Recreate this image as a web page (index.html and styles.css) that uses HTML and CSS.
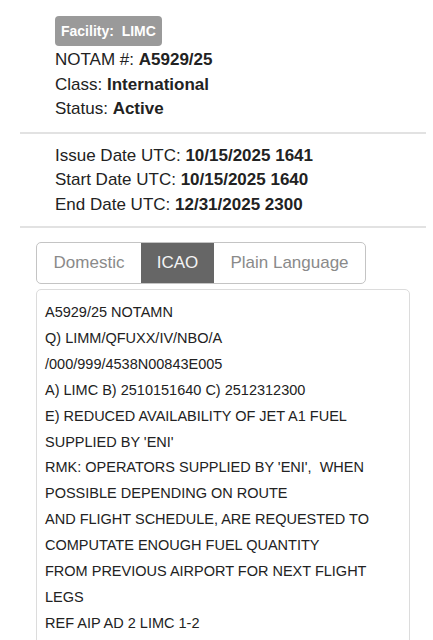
FILE: index.html
```html
<!DOCTYPE html>
<html>
<head>
<meta charset="utf-8">
<link rel="stylesheet" href="styles.css">
</head>
<body>
<div class="section head">
  <div class="badge">Facility:&nbsp; LIMC</div>
  <div class="row">NOTAM #: <b>A5929/25</b></div>
  <div class="row">Class: <b>International</b></div>
  <div class="row">Status: <b>Active</b></div>
</div>
<div class="divider"></div>
<div class="section dates">
  <div class="row">Issue Date UTC: <b>10/15/2025 1641</b></div>
  <div class="row">Start Date UTC: <b>10/15/2025 1640</b></div>
  <div class="row">End Date UTC: <b>12/31/2025 2300</b></div>
</div>
<div class="divider"></div>
<div class="tabs">
  <div class="tab">Domestic</div>
  <div class="tab active">ICAO</div>
  <div class="tab">Plain Language</div>
</div>
<div class="content">
  <div>A5929/25 NOTAMN</div>
  <div>Q) LIMM/QFUXX/IV/NBO/A</div>
  <div>/000/999/4538N00843E005</div>
  <div>A) LIMC B) 2510151640 C) 2512312300</div>
  <div>E) REDUCED AVAILABILITY OF JET A1 FUEL</div>
  <div>SUPPLIED BY 'ENI'</div>
  <div>RMK: OPERATORS SUPPLIED BY 'ENI',&nbsp; WHEN</div>
  <div>POSSIBLE DEPENDING ON ROUTE</div>
  <div>AND FLIGHT SCHEDULE, ARE REQUESTED TO</div>
  <div>COMPUTATE ENOUGH FUEL QUANTITY</div>
  <div>FROM PREVIOUS AIRPORT FOR NEXT FLIGHT</div>
  <div>LEGS</div>
  <div>REF AIP AD 2 LIMC 1-2</div>
</div>
</body>
</html>
```
FILE: styles.css
```css
html, body {
  margin: 0;
  padding: 0;
  background: #fff;
}
body {
  font-family: "Liberation Sans", Arial, sans-serif;
  color: #222;
  width: 433px;
  overflow: hidden;
}
.section {
  padding-left: 55px;
}
.head {
  padding-top: 16px;
  padding-bottom: 10px;
}
.badge {
  display: inline-block;
  background: #9a9a9a;
  color: #fff;
  font-weight: bold;
  font-size: 14px;
  line-height: 30px;
  height: 30px;
  padding: 0 6px;
  border-radius: 4px;
  margin-bottom: 2px;
}
.row {
  font-size: 17px;
  line-height: 24.5px;
  color: #222;
}
.row b {
  font-weight: bold;
}
.divider {
  height: 2px;
  background: #e2e2e2;
  margin: 0 7px 0 20px;
}
.dates {
  padding-top: 10px;
  padding-bottom: 9px;
}
.tabs {
  display: flex;
  margin: 14px 0 0 36px;
  width: 330px;
  height: 42px;
  border: 1px solid #c4c4c4;
  border-radius: 5px;
  box-sizing: border-box;
  overflow: hidden;
}
.tab {
  display: flex;
  align-items: center;
  justify-content: center;
  font-size: 17px;
  color: #8a8a8a;
}
.tab:nth-child(1) { width: 104px; }
.tab:nth-child(2) { width: 73px; }
.tab:nth-child(3) { flex: 1; }
.tab.active {
  background: #666;
  color: #f4f4f4;
}
.content {
  margin: 5px 0 0 36px;
  width: 374px;
  box-sizing: border-box;
  border: 1px solid #dcdcdc;
  border-radius: 5px;
  padding: 10px 8px 20px 8px;
  font-size: 14.5px;
  line-height: 25.9px;
  color: #222;
}
```
